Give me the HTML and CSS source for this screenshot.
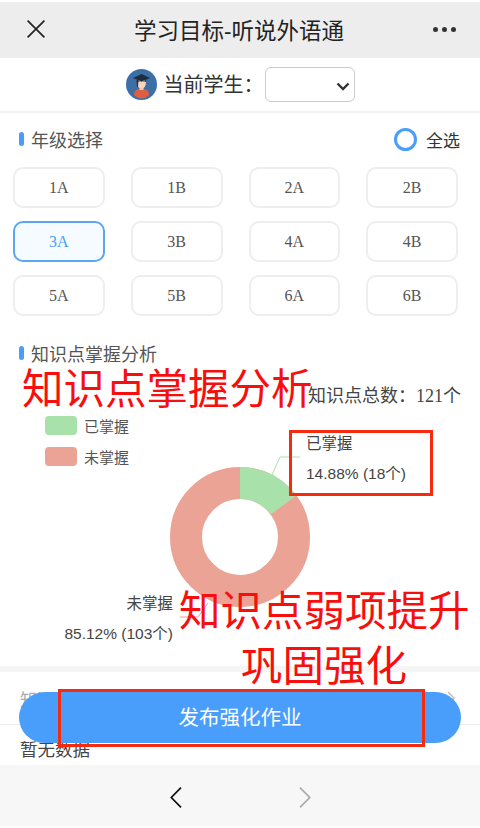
FILE: index.html
```html
<!DOCTYPE html>
<html lang="zh-CN">
<head>
    <meta charset="UTF-8">
    <meta name="viewport" content="width=device-width, initial-scale=1.0">
    <title>学习目标-听说外语通</title>
    <link rel="stylesheet" href="styles.css">
</head>
<body>
    <div class="page">
        <header class="top-bar">
            <svg class="top-close" width="18" height="18" viewBox="0 0 18 18"><path d="M0.600 0.600 L17.400 17.400 M17.400 0.600 L0.600 17.400" stroke="#222" stroke-width="1.700" fill="none"/></svg>
            <h1 class="top-title">学习目标-听说外语通</h1>
            <div class="top-more"><span></span><span></span><span></span></div>
        </header>

        <div class="student-row">
            <svg class="avatar" width="31" height="31" viewBox="0 0 31 31">
                <circle cx="15.500" cy="15.500" r="15.500" fill="#3b6fa6"/>
                <path d="M8 26 C8 21 11 20 15.500 20 C20 20 23 21 23 26 C21 28 18 29.500 15.500 29.500 C13 29.500 10 28 8 26 Z" fill="#dc5f43"/>
                <rect x="13.500" y="16" width="4" height="5" fill="#eec9ad"/>
                <ellipse cx="15.500" cy="14" rx="4.500" ry="5.500" fill="#f3d6bd"/>
                <path d="M10.500 11 L11 18 L12 18 L12.500 11 Z" fill="#3a2a2a"/>
                <path d="M15.500 5 L24 9 L15.500 12.500 L7 9 Z" fill="#1f2c3d"/>
                <path d="M11 11 L11 13 C13 11.500 18 11.500 20 13 L20 11 L15.500 12.500 Z" fill="#1f2c3d"/>
            </svg>
            <span class="student-label">当前学生：</span>
            <div class="student-select">
                <svg width="14" height="9" viewBox="0 0 14 9"><path d="M1.500 1.500 L7 7 L12.500 1.500" stroke="#333" stroke-width="2.400" fill="none"/></svg>
            </div>
        </div>

        <section class="grade-section">
            <div class="section-head">
                <i class="section-mark"></i>
                <span class="section-title">年级选择</span>
                <div class="select-all">
                    <i class="select-ring"></i>
                    <span>全选</span>
                </div>
            </div>
            <div class="grade-grid">
                <div class="grade-btn">1A</div>
                <div class="grade-btn">1B</div>
                <div class="grade-btn">2A</div>
                <div class="grade-btn">2B</div>
                <div class="grade-btn active">3A</div>
                <div class="grade-btn">3B</div>
                <div class="grade-btn">4A</div>
                <div class="grade-btn">4B</div>
                <div class="grade-btn">5A</div>
                <div class="grade-btn">5B</div>
                <div class="grade-btn">6A</div>
                <div class="grade-btn">6B</div>
            </div>
        </section>

        <section class="chart-section">
            <div class="section-head">
                <i class="section-mark"></i>
                <span class="section-title">知识点掌握分析</span>
            </div>
            <div class="chart-total">知识点总数：<span class="serif">121</span>个</div>
            <div class="legend">
                <div class="legend-item"><i class="swatch green"></i>已掌握</div>
                <div class="legend-item"><i class="swatch red"></i>未掌握</div>
            </div>

            <svg class="donut" width="480" height="314" viewBox="0 0 480 314">
                <circle cx="240" cy="185" r="54" fill="none" stroke="#eba395" stroke-width="32"/>
                <path d="M240 115 A70 70 0 0 1 296.300 143.400 L270.600 162.500 A38 38 0 0 0 240 147 Z" fill="#a8e2aa"/>
                <path d="M272 123 L280 105 L300 105" stroke="#a8e2aa" stroke-width="1" fill="none"/>
                <path d="M208 251 L198 265 L180 265" stroke="#eba395" stroke-width="1" fill="none"/>
            </svg>
            <div class="slice-label label-done">
                <div>已掌握</div>
                <div>14.88% (18个)</div>
            </div>
            <div class="slice-label label-todo">
                <div>未掌握</div>
                <div>85.12% (103个)</div>
            </div>

            <div class="note note-title">知识点掌握分析</div>
            <div class="note note-weak">知识点弱项提升</div>
            <div class="note note-fix">巩固强化</div>
            <div class="note-box box-chart"></div>
        </section>

        <section class="weak-section">
            <div class="weak-head">
                <span>知识点弱项</span>
                <svg width="9" height="14" viewBox="0 0 9 14"><path d="M1 1 L7 7 L1 13" stroke="#bbb" stroke-width="1.400" fill="none"/></svg>
            </div>
            <div class="weak-empty">暂无数据</div>
        </section>

        <div class="publish-btn">发布强化作业</div>
        <div class="note-box box-publish"></div>

        <footer class="nav-bar">
            <svg width="12" height="21" viewBox="0 0 12 21"><path d="M11 0.700 L1.300 10.500 L11 20.300" stroke="#111" stroke-width="1.700" fill="none"/></svg>
            <svg width="12" height="21" viewBox="0 0 12 21"><path d="M1 0.700 L10.700 10.500 L1 20.300" stroke="#aaa" stroke-width="1.700" fill="none"/></svg>
        </footer>
    </div>
</body>
</html>
```

FILE: styles.css
```css
html, body {
    margin: 0;
    height: 100%;
}

body {
    font-family: "Liberation Sans", "Noto Sans CJK SC", sans-serif;
    color: #444;
    background-color: #fff;
}

.page {
    position: relative;
    display: flex;
    flex-direction: column;
    width: 480px;
    height: 828px;
    overflow: hidden;
}

.serif {
    font-family: "Liberation Serif", serif;
}

/* top bar */
.top-bar {
    flex: none;
    display: flex;
    align-items: center;
    justify-content: space-between;
    height: 56px;
    margin-top: 2px;
    padding: 0 24px 2px 27px;
    box-sizing: border-box;
    background-color: #ededed;
}

.top-title {
    margin: 0;
    font-size: 22.500px;
    font-weight: 400;
    color: #222;
}

.top-more {
    display: flex;
    gap: 4px;
}

.top-more span {
    width: 5px;
    height: 5px;
    border-radius: 50%;
    background-color: #333;
}

/* student picker */
.student-row {
    flex: none;
    display: flex;
    align-items: center;
    justify-content: center;
    height: 55px;
    box-sizing: border-box;
    border-bottom: 2px solid #f2f2f2;
}

.avatar {
    margin-right: 7px;
}

.student-label {
    width: 101px;
    margin-bottom: 3px;
    font-size: 20px;
    color: #333;
    white-space: nowrap;
}

.student-select {
    display: flex;
    align-items: center;
    justify-content: flex-end;
    width: 90px;
    height: 35px;
    padding: 4px 4px 0 0;
    box-sizing: border-box;
    border: 1px solid #ccc;
    border-radius: 6px;
}

/* section heads */
.section-head {
    display: flex;
    align-items: center;
    height: 24px;
    padding: 0 20px 0 19px;
}

.chart-section .section-head {
    margin-top: -1px;
}

.section-mark {
    width: 5px;
    height: 14px;
    margin-right: 7px;
    border-radius: 3px;
    background-color: #4a9efb;
}

.section-title {
    font-size: 18px;
    color: #555;
}

.select-all {
    display: flex;
    align-items: center;
    gap: 9px;
    margin-left: auto;
    font-size: 17px;
    color: #333;
}

.select-ring {
    width: 23px;
    height: 23px;
    box-sizing: border-box;
    border: 3px solid #4a9efb;
    border-radius: 50%;
}

/* grades */
.grade-section {
    flex: none;
    padding-top: 14px;
}

.grade-grid {
    display: grid;
    grid-template-columns: repeat(4, 91.750px);
    grid-auto-rows: 41px;
    column-gap: 26px;
    row-gap: 13px;
    padding: 16px 0 0 13px;
}

.grade-btn {
    display: flex;
    align-items: center;
    justify-content: center;
    box-sizing: border-box;
    border: 2px solid #eee;
    border-radius: 10px;
    font-family: "Liberation Serif", serif;
    font-size: 16px;
    color: #555;
}

.grade-btn.active {
    border-color: #5aa7f0;
    background-color: #f6fbff;
    color: #4a9efb;
}

/* chart */
.chart-section {
    position: relative;
    flex: none;
    height: 330px;
    margin-top: 26px;
    border-bottom: 6px solid #f5f5f5;
    box-sizing: border-box;
}

.chart-total {
    position: absolute;
    top: 39px;
    right: 19px;
    font-size: 18px;
    color: #444;
}

.legend {
    position: absolute;
    top: 74px;
    left: 45px;
    display: flex;
    flex-direction: column;
    gap: 12px;
}

.legend-item {
    display: flex;
    align-items: center;
    gap: 7px;
    height: 19px;
    font-size: 15px;
    color: #555;
}

.swatch {
    width: 32px;
    height: 19px;
    border-radius: 4px;
}

.swatch.green {
    background-color: #a8e2aa;
}

.swatch.red {
    background-color: #eba395;
}

.donut {
    position: absolute;
    top: 10px;
    left: 0;
}

.slice-label {
    position: absolute;
    display: flex;
    flex-direction: column;
    gap: 10px;
    font-size: 15.500px;
    line-height: 20px;
    color: #444;
}

.label-done {
    top: 92px;
    left: 306px;
}

.label-todo {
    top: 252px;
    right: 307px;
    align-items: flex-end;
    width: 130px;
}

/* red notes drawn over the screenshot */
.note {
    position: absolute;
    font-family: "Noto Sans CJK SC", sans-serif;
    font-size: 41.500px;
    line-height: 56px;
    color: #f90e0e;
    white-space: nowrap;
}

.note-title {
    top: 16px;
    left: 22px;
}

.note-weak {
    top: 238px;
    left: 179px;
}

.note-fix {
    top: 293px;
    left: 241px;
    z-index: 2;
}

.note-box {
    position: absolute;
    box-sizing: border-box;
    border: 3px solid #f52a0e;
}

.box-chart {
    top: 88px;
    left: 289px;
    width: 144px;
    height: 66px;
}

.box-publish {
    top: 689px;
    left: 58px;
    width: 367px;
    height: 58px;
}

/* weak points */
.weak-section {
    flex: 1;
}

.weak-head {
    display: flex;
    align-items: center;
    justify-content: space-between;
    height: 53px;
    padding: 0 24px 0 20px;
    box-sizing: border-box;
    border-bottom: 1px solid #eee;
    font-size: 17px;
    color: #aaa;
}

.weak-empty {
    padding: 13px 20px 0;
    font-size: 17.500px;
    line-height: 24px;
    color: #444;
}

.publish-btn {
    position: absolute;
    top: 692px;
    left: 19px;
    width: 442px;
    height: 51px;
    border-radius: 26px;
    background-color: #4a9efb;
    color: #fff;
    font-size: 20.500px;
    line-height: 51px;
    text-align: center;
}

/* bottom nav */
.nav-bar {
    flex: none;
    display: flex;
    align-items: center;
    justify-content: center;
    gap: 117px;
    height: 61px;
    margin-bottom: 2px;
    padding-top: 4px;
    box-sizing: border-box;
    background-color: #f7f7f7;
}
```
